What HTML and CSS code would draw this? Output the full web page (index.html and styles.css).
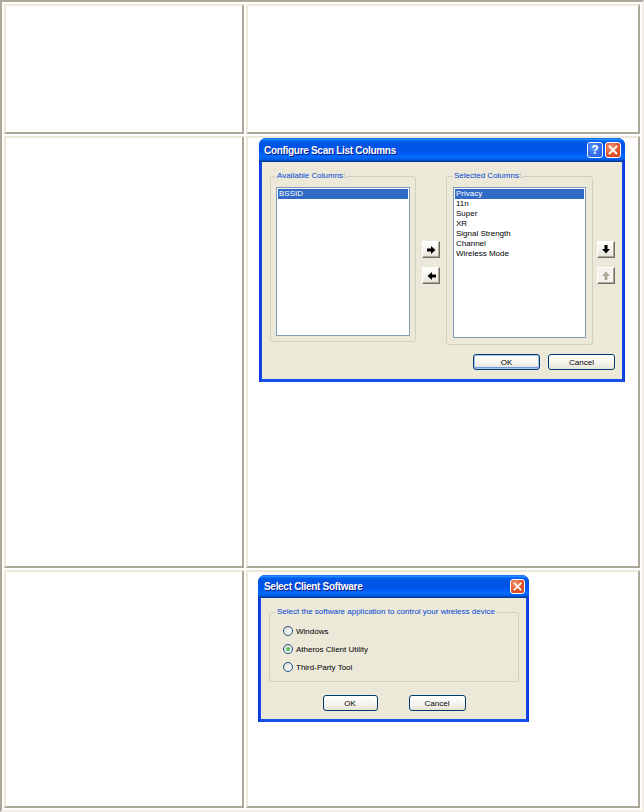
FILE: index.html
```html
<!DOCTYPE html>
<html>
<head>
<meta charset="utf-8">
<title>Configure Scan List Columns</title>
<link rel="stylesheet" href="styles.css">
</head>
<body>
<div class="page">
  <div class="cell"></div>
  <div class="cell"></div>

  <div class="cell"></div>
  <div class="cell shot-a">
    <div class="win win-a">
      <div class="titlebar">
        <span class="title">Configure Scan List Columns</span>
        <span class="tb-buttons">
          <span class="tb-btn help">?</span>
          <span class="tb-btn close"><svg width="10" height="10" viewBox="0 0 10 10"><path d="M1.5 1.5 L8.5 8.5 M8.5 1.5 L1.5 8.5" stroke="#fff" stroke-width="1.8" stroke-linecap="square"/></svg></span>
        </span>
      </div>
      <div class="winbody body-a">
        <div class="cols">
          <div class="group g-avail">
            <span class="glabel">Available Columns:</span>
            <div class="listbox lb-avail">
              <div class="item sel">BSSID</div>
            </div>
          </div>
          <div class="arrows mid">
            <span class="sbtn"><svg width="9" height="8" viewBox="0 0 9 8"><polygon points="0,2.5 4,2.5 4,0 8.5,4 4,8 4,5.5 0,5.5" fill="#000"/></svg></span>
            <span class="sbtn"><svg width="9" height="8" viewBox="0 0 9 8"><polygon points="9,2.5 5,2.5 5,0 0.5,4 5,8 5,5.5 9,5.5" fill="#000"/></svg></span>
          </div>
          <div class="group g-sel">
            <span class="glabel">Selected Columns:</span>
            <div class="listbox lb-sel">
              <div class="item sel">Privacy</div>
              <div class="item">11n</div>
              <div class="item">Super</div>
              <div class="item">XR</div>
              <div class="item">Signal Strength</div>
              <div class="item">Channel</div>
              <div class="item">Wireless Mode</div>
            </div>
          </div>
          <div class="arrows side">
            <span class="sbtn"><svg width="8" height="9" viewBox="0 0 8 9"><polygon points="2.5,0 5.5,0 5.5,4 8,4 4,8.5 0,4 2.5,4" fill="#000"/></svg></span>
            <span class="sbtn disabled"><svg width="8" height="9" viewBox="0 0 8 9"><polygon points="2.5,9 5.5,9 5.5,5 8,5 4,0.5 0,5 2.5,5" fill="#aca899"/></svg></span>
          </div>
        </div>
        <div class="actions">
          <span class="btn btn-a default">OK</span>
          <span class="btn btn-a">Cancel</span>
        </div>
      </div>
    </div>
  </div>

  <div class="cell"></div>
  <div class="cell shot-b">
    <div class="win win-b">
      <div class="titlebar">
        <span class="title">Select Client Software</span>
        <span class="tb-buttons">
          <span class="tb-btn close small"><svg width="9" height="9" viewBox="0 0 10 10"><path d="M1.5 1.5 L8.5 8.5 M8.5 1.5 L1.5 8.5" stroke="#fff" stroke-width="1.8" stroke-linecap="square"/></svg></span>
        </span>
      </div>
      <div class="winbody body-b">
        <div class="group g-client">
          <span class="glabel">Select the software application to control your wireless device</span>
          <div class="radios">
            <div class="radio-row"><span class="radio"></span><span>Windows</span></div>
            <div class="radio-row"><span class="radio checked"></span><span>Atheros Client Utility</span></div>
            <div class="radio-row"><span class="radio"></span><span>Third-Party Tool</span></div>
          </div>
        </div>
        <div class="actions actions-b">
          <span class="btn btn-ok">OK</span>
          <span class="btn btn-cancel">Cancel</span>
        </div>
      </div>
    </div>
  </div>
</div>
</body>
</html>
```
FILE: styles.css
```css
* { box-sizing: border-box; }
html, body { margin: 0; padding: 0; background: #fff; }
body {
  font-family: "Liberation Sans", Arial, sans-serif;
  font-size: 8px;
  color: #000;
}

.page {
  display: grid;
  grid-template-columns: 240px 394px;
  grid-template-rows: 130px 432px 238px;
  gap: 2px;
  padding: 2px;
  width: 644px;
  height: 812px;
  border: 2px solid;
  border-color: #aca899 #f1efe2 #f1efe2 #aca899;
}

.cell {
  border: 2px solid;
  border-color: #ece9d8 #aca899 #aca899 #ece9d8;
  background: #fff;
}
.shot-a { padding: 0 0 0 11px; }
.shot-b { padding: 3px 0 0 10px; }

/* window chrome */
.win {
  display: flex;
  flex-direction: column;
  background: linear-gradient(to right, #0831d9, #1650e8 3px, #1650e8 calc(100% - 3px), #0831d9);
  padding: 0 3px 3px;
  border-radius: 7px 7px 0 0;
}
.win-a { width: 366px; }
.win-b { width: 271px; }

.titlebar {
  margin: 0 -3px;
  height: 24px;
  display: flex;
  align-items: center;
  justify-content: space-between;
  padding: 0 4px 0 5px;
  border-radius: 7px 7px 0 0;
  background: linear-gradient(to bottom,
    #0058ee 0%, #3593ff 4%, #288eff 6%, #127dff 8%, #036ffc 10%,
    #0262ee 14%, #0057e5 20%, #0054e3 24%, #0055eb 56%, #005bf5 66%,
    #026afe 76%, #0062ef 86%, #0052d6 92%, #0040ab 96%, #003092 100%);
}
.win-b .titlebar { height: 23px; padding: 0 4px 0 6px; }

.title {
  color: #fff;
  font-weight: bold;
  font-size: 10px;
  letter-spacing: -0.3px;
  text-shadow: 1px 1px 0 #0a1883;
}

.tb-buttons { display: flex; gap: 2px; }
.tb-btn {
  width: 16px;
  height: 16px;
  border: 1px solid #fff;
  border-radius: 3px;
  display: flex;
  align-items: center;
  justify-content: center;
}
.tb-btn.small { width: 15px; height: 15px; }
.help {
  background: radial-gradient(circle at 40% 35%, #5a9bff 0%, #2e6ceb 60%, #1f55d2 100%);
  color: #fff;
  font-weight: bold;
  font-size: 12px;
  line-height: 1;
}
.close {
  background: radial-gradient(circle at 35% 30%, #f29877 0%, #e2542b 55%, #c7401c 100%);
}

.winbody { background: #ece9d8; }
.body-a { padding: 14px 7px 9px 8px; }
.body-b { padding: 14px 7px 8px 8px; }

/* group boxes */
.cols { display: flex; align-items: flex-start; }
.group {
  border: 1px solid #d0d0bf;
  border-radius: 3px;
}
.g-avail { padding: 0 5px 5px; }
.g-sel { padding: 0 6px 6px; margin-left: 6px; }
.g-client { width: 250px; padding: 0 5px 5px 6px; }

.glabel {
  display: block;
  width: fit-content;
  margin: -6px 0 0 0;
  padding: 0 1px;
  height: 10px;
  line-height: 10px;
  background: #ece9d8;
  color: #0046d5;
  white-space: nowrap;
}

/* list boxes */
.listbox {
  margin-top: 6px;
  background: #fff;
  border: 1px solid #7f9db9;
  padding: 1px;
}
.lb-avail { width: 134px; height: 149px; }
.lb-sel { width: 133px; height: 151px; }
.item {
  height: 10px;
  line-height: 10px;
  padding-left: 1px;
  white-space: nowrap;
}
.item.sel { background: #316ac5; color: #fff; }

/* small arrow buttons */
.arrows {
  display: flex;
  flex-direction: column;
  gap: 9px;
  margin-top: 65px;
  width: 18px;
}
.arrows.mid { margin-left: 6px; }
.arrows.side { margin-left: 4px; }
.sbtn {
  width: 18px;
  height: 17px;
  display: flex;
  align-items: center;
  justify-content: center;
  background: linear-gradient(#ffffff, #f3f2ea 60%, #e4e1d4);
  border: 1px solid;
  border-color: #ffffff #716f64 #716f64 #ffffff;
  box-shadow: inset -1px -1px 0 #aca899;
}
.sbtn.disabled { background: #f4f3ee; }

/* push buttons */
.actions {
  display: flex;
  justify-content: flex-end;
  gap: 8px;
  margin-top: 9px;
}
.actions-b { justify-content: center; gap: 31px; margin-top: 13px; }
.btn {
  height: 16px;
  border: 1px solid #003c74;
  border-radius: 3px;
  background: linear-gradient(#ffffff 0%, #f5f4ef 55%, #e6e3d6 100%);
  display: flex;
  align-items: center;
  justify-content: center;
  font-size: 8px;
}
.btn-a { width: 67px; }
.btn-ok { width: 55px; }
.btn-cancel { width: 57px; }
.btn.default { box-shadow: inset 0 0 0 1px #a9c3ec, inset 0 -1px 0 1px #6f95dc; }

/* radios */
.radios { margin-top: 5px; display: flex; flex-direction: column; }
.radio-row {
  height: 18px;
  display: flex;
  align-items: center;
  gap: 3px;
  padding-left: 7px;
}
.radio {
  width: 10px;
  height: 10px;
  border: 1px solid #1c5180;
  border-radius: 50%;
  background: linear-gradient(135deg, #dcdad0, #ffffff);
  display: flex;
  align-items: center;
  justify-content: center;
}
.radio.checked::after {
  content: "";
  width: 4px;
  height: 4px;
  border-radius: 50%;
  background: radial-gradient(circle at 35% 35%, #6fdc6f, #21a121);
}
```
